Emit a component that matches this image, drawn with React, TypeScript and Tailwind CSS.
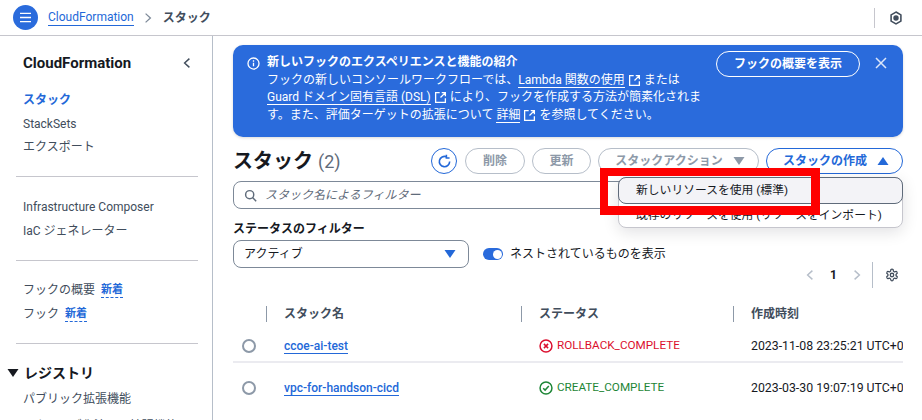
import React from "react";

const font = { fontFamily: 'Roboto,"Noto Sans CJK JP",sans-serif' };

function Ext({ className = "" }: { className?: string }) {
  return (
    <svg viewBox="0 0 16 16" className={`inline-block w-[13px] h-[13px] ${className}`} fill="none" stroke="currentColor" strokeWidth="1.6">
      <path d="M7 2H2v12h12V9M9.5 2H14v4.5M14 2L8 8" />
    </svg>
  );
}

function Caret({ up = false, className = "" }: { up?: boolean; className?: string }) {
  return (
    <svg viewBox="0 0 12 10" className={`w-[12px] h-[10px] ${className}`} fill="currentColor">
      <path d={up ? "M6 1l5.5 8H.5z" : "M.5 1h11L6 9z"} />
    </svg>
  );
}

function Nav({ children, className = "" }: { children: React.ReactNode; className?: string }) {
  return <div className={`text-[12px] leading-[18px] text-[#414d5c] ${className}`}>{children}</div>;
}

function New() {
  return <span className="ml-[6px] text-[11px] leading-[15px] font-bold text-[#2368d8] border-b border-dashed border-[#2368d8]">新着</span>;
}

function Sep({ className = "" }: { className?: string }) {
  return <div className={`h-px bg-[#c6c6cd] ml-[16px] w-[182px] ${className}`} />;
}

function Sidebar() {
  return (
    <aside className="w-[213px] shrink-0 border-r border-[#b6bec9] overflow-hidden h-[384px]">
      <div className="flex items-center justify-between pl-[23px] pr-[21px] pt-[16px]">
        <div className="text-[15px] leading-[22px] font-bold text-[#16191f]">CloudFormation</div>
        <svg viewBox="0 0 10 14" className="w-[8px] h-[12px] text-[#414d5c]" fill="none" stroke="currentColor" strokeWidth="1.8"><path d="M8 1.5L2 7l6 5.5" /></svg>
      </div>
      <div className="pl-[23px] pt-[17px]">
        <div className="text-[12px] leading-[18px] font-bold text-[#2368d8]">スタック</div>
        <Nav className="mt-[6px]">StackSets</Nav>
        <Nav className="mt-[5px]">エクスポート</Nav>
      </div>
      <Sep className="mt-[20px]" />
      <div className="pl-[23px] pt-[21px]">
        <Nav>Infrastructure Composer</Nav>
        <Nav className="mt-[6px]">IaC ジェネレーター</Nav>
      </div>
      <Sep className="mt-[20px]" />
      <div className="pl-[23px] pt-[20px]">
        <Nav className="flex items-center">フックの概要<New /></Nav>
        <Nav className="flex items-center mt-[6px]">フック<New /></Nav>
      </div>
      <Sep className="mt-[20px]" />
      <div className="flex items-center pl-[7px] mt-[19px] gap-[5px]">
        <Caret className="text-[#16191f]" />
        <div className="text-[14px] leading-[20px] font-bold text-[#16191f]">レジストリ</div>
      </div>
      <div className="pl-[23px] pt-[7px]">
        <Nav>パブリック拡張機能</Nav>
        <Nav className="mt-[9px]">アクティブ化済みの拡張機能</Nav>
      </div>
    </aside>
  );
}

function Pill({ children, className = "" }: { children: React.ReactNode; className?: string }) {
  return (
    <div className={`h-[26px] rounded-full border flex items-center justify-center text-[12px] font-bold ${className}`}>{children}</div>
  );
}

function Link({ children }: { children: React.ReactNode }) {
  return <span className="border-b border-white">{children}</span>;
}

function Banner() {
  return (
    <div className="h-[92px] rounded-[10px] bg-[#2a6bdc] text-white flex pl-[14px] pr-[16px] pt-[9px] shadow-[0_1px_3px_rgba(0,0,0,0.15)]">
      <svg viewBox="0 0 16 16" className="w-[13px] h-[13px] mt-[3px] shrink-0" fill="none" stroke="currentColor" strokeWidth="1.6">
        <circle cx="8" cy="8" r="6.8" /><path d="M8 7v4.5M8 4v1.8" />
      </svg>
      <div className="ml-[7px] w-[440px] shrink-0 text-[12px] leading-[17.5px] whitespace-nowrap">
        <div className="font-bold">新しいフックのエクスペリエンスと機能の紹介</div>
        <div>フックの新しいコンソールワークフローでは、<Link>Lambda 関数の使用</Link> <Ext /> または</div>
        <div><Link>Guard ドメイン固有言語 (DSL)</Link> <Ext /> により、フックを作成する方法が簡素化されま</div>
        <div>す。また、評価ターゲットの拡張について <Link>詳細</Link> <Ext /> を参照してください。</div>
      </div>
      <div className="ml-auto flex items-start">
        <div className="h-[26px] w-[144px] rounded-full border border-white flex items-center justify-center text-[12px] font-bold -mt-[3px]">フックの概要を表示</div>
        <svg viewBox="0 0 12 12" className="w-[12px] h-[12px] ml-[15px] mt-[3px] text-[#dbe6fa]" fill="none" stroke="currentColor" strokeWidth="1.5"><path d="M1 1l10 10M11 1L1 11" /></svg>
      </div>
    </div>
  );
}

function Toolbar() {
  return (
    <div className="flex items-center mt-[11px] h-[26px]">
      <div className="text-[20px] leading-[26px] font-bold text-[#16191f]">スタック <span className="text-[18px] font-normal text-[#5f6b7a]">(2)</span></div>
      <div className="ml-auto flex items-center gap-[7px]">
        <div className="w-[26px] h-[26px] rounded-full border border-[#2368d8] flex items-center justify-center mr-[1px]">
          <svg viewBox="0 0 16 16" className="w-[15px] h-[15px] text-[#2368d8]" fill="none" stroke="currentColor" strokeWidth="1.7">
            <path d="M13.5 8A5.5 5.5 0 1 1 10 2.9" /><path d="M10 .8V4.2h3.4" />
          </svg>
        </div>
        <Pill className="w-[60px] border-[#b6bec9] text-[#8d99a8]">削除</Pill>
        <Pill className="w-[59px] border-[#b6bec9] text-[#8d99a8]">更新</Pill>
        <Pill className="w-[161px] border-[#b6bec9] text-[#8d99a8] gap-[10px] pl-[3px]">スタックアクション<Caret className="text-[#8d99a8]" /></Pill>
        <Pill className="w-[137px] border-[#2368d8] text-[#2368d8] gap-[10px] pl-[3px]">スタックの作成<Caret up className="text-[#2368d8]" /></Pill>
      </div>
    </div>
  );
}

function Menu() {
  return (
    <div className="absolute right-0 -top-[4px] w-[285px] h-[51px] rounded-[8px] bg-white border border-[#c6c6cd] shadow-[0_4px_16px_rgba(0,7,22,0.12)] text-[11.8px] text-[#16191f]">
      <div className="-m-px h-[27px] rounded-[8px] border border-[#5f6b7a] bg-[#f3f3f7] flex items-center pl-[17px]">新しいリソースを使用 (標準)</div>
      <div className="h-[25px] flex items-center pl-[17px]">既存のリソースを使用 (リソースをインポート)</div>
    </div>
  );
}

function Filters() {
  return (
    <>
      <div className="relative mt-[7px]">
        <div className="h-[28px] rounded-[8px] border border-[#7d8998] flex items-center pl-[10px] text-[12px] italic text-[#5f6b7a]">
          <svg viewBox="0 0 16 16" className="w-[13px] h-[13px] mr-[8px] text-[#5f6b7a]" fill="none" stroke="currentColor" strokeWidth="1.8"><circle cx="7" cy="7" r="5" /><path d="M10.5 10.5L15 15" /></svg>
          スタック名によるフィルター
        </div>
        <Menu />
      </div>
      <div className="mt-[11px] text-[12px] leading-[18px] font-bold text-[#16191f]">ステータスのフィルター</div>
      <div className="flex items-center mt-[2px]">
        <div className="w-[236px] h-[28px] rounded-[8px] border border-[#7d8998] flex items-center justify-between pl-[10px] pr-[12px] text-[12px] text-[#16191f]">
          アクティブ<Caret className="text-[#2368d8]" />
        </div>
        <div className="ml-[14px] w-[20px] h-[12px] rounded-full bg-[#2a6bdc] relative">
          <div className="absolute right-[1.5px] top-[1.5px] w-[9px] h-[9px] rounded-full bg-white" />
        </div>
        <div className="ml-[7px] text-[12px] text-[#16191f]">ネストされているものを表示</div>
      </div>
    </>
  );
}

function Pager() {
  return (
    <div className="flex justify-end items-center h-[26px] -mt-[6px] pr-[4px]">
      <svg viewBox="0 0 10 14" className="w-[8px] h-[12px] text-[#b6bec9]" fill="none" stroke="currentColor" strokeWidth="1.8"><path d="M8 1.5L2 7l6 5.5" /></svg>
      <div className="mx-[16px] text-[12px] font-bold text-[#16191f]">1</div>
      <svg viewBox="0 0 10 14" className="w-[8px] h-[12px] text-[#b6bec9]" fill="none" stroke="currentColor" strokeWidth="1.8"><path d="M2 1.5L8 7l-6 5.5" /></svg>
      <div className="ml-[11px] mr-[12px] w-px h-[26px] bg-[#b6bec9]" />
      <svg viewBox="0 0 24 24" className="w-[14px] h-[14px] text-[#414d5c]" fill="none" stroke="currentColor" strokeWidth="2.2">
        <path d="M12.2 2h-.4a2 2 0 0 0-2 2v.2a2 2 0 0 1-1 1.7l-.4.3a2 2 0 0 1-2 0l-.2-.1a2 2 0 0 0-2.7.7l-.2.4a2 2 0 0 0 .7 2.7l.2.1a2 2 0 0 1 1 1.7v.5a2 2 0 0 1-1 1.7l-.2.1a2 2 0 0 0-.7 2.7l.2.4a2 2 0 0 0 2.7.7l.2-.1a2 2 0 0 1 2 0l.4.3a2 2 0 0 1 1 1.7v.2a2 2 0 0 0 2 2h.4a2 2 0 0 0 2-2v-.2a2 2 0 0 1 1-1.7l.4-.3a2 2 0 0 1 2 0l.2.1a2 2 0 0 0 2.7-.7l.2-.4a2 2 0 0 0-.7-2.7l-.2-.1a2 2 0 0 1-1-1.7v-.5a2 2 0 0 1 1-1.7l.2-.1a2 2 0 0 0 .7-2.7l-.2-.4a2 2 0 0 0-2.7-.7l-.2.1a2 2 0 0 1-2 0l-.4-.3a2 2 0 0 1-1-1.7V4a2 2 0 0 0-2-2z" />
        <circle cx="12" cy="12" r="3" />
      </svg>
    </div>
  );
}

const cols = "grid grid-cols-[34px_255px_212px_169px]";

function Row({ name, status, date, ok, border }: { name: string; status: string; date: string; ok: boolean; border: boolean }) {
  const color = ok ? "text-[#1d8636]" : "text-[#db0f2e]";
  return (
    <div className={`${cols} items-center text-[12px] ${border ? "h-[39px] pt-[7px] border-b-2 border-[#ebebf0]" : "h-[50px]"}`}>
      <div className="pl-[9px]"><div className="w-[14px] h-[14px] rounded-full border-2 border-[#8d99a8]" /></div>
      <div className="pl-[17px]"><span className="text-[#2368d8] border-b border-[#2368d8] font-medium">{name}</span></div>
      <div className={`pl-[17px] flex items-center gap-[4px] text-[11.7px] ${color}`}>
        <svg viewBox="0 0 16 16" className="w-[14px] h-[14px] shrink-0" fill="none" stroke="currentColor" strokeWidth="1.7">
          <circle cx="8" cy="8" r="6.8" />
          {ok ? <path d="M4.8 8.2l2.2 2.2 4.2-4.6" /> : <path d="M5.6 5.6l4.8 4.8M10.4 5.6l-4.8 4.8" />}
        </svg>
        {status}
      </div>
      <div className="pl-[17px] text-[12.3px] text-[#16191f] whitespace-nowrap overflow-hidden">{date}</div>
    </div>
  );
}

function Table() {
  return (
    <div className="mt-[16px]">
      <div className={`${cols} h-[20px] items-center text-[12px] font-bold text-[#414d5c]`}>
        <div className="h-[16px] border-r border-[#8d99a8] mr-0 w-[34px]" />
        <div className="pl-[17px] h-[16px] leading-[16px] border-r border-[#8d99a8]">スタック名</div>
        <div className="pl-[17px] h-[16px] leading-[16px] border-r border-[#8d99a8]">ステータス</div>
        <div className="pl-[17px] h-[16px] leading-[16px]">作成時刻</div>
      </div>
      <Row name="ccoe-ai-test" status="ROLLBACK_COMPLETE" date="2023-11-08 23:25:21 UTC+09:00" ok={false} border />
      <Row name="vpc-for-handson-cicd" status="CREATE_COMPLETE" date="2023-03-30 19:07:19 UTC+09:00" ok border={false} />
    </div>
  );
}

export default function App() {
  return (
    <div style={font} className="relative w-[922px] h-[420px] overflow-hidden bg-white">
      <header className="h-[36px] border-b border-[#c6c6cd] flex items-center pl-[13px] pr-[19px]">
        <div className="w-[25px] h-[25px] rounded-full bg-[#2a6bdc] flex items-center justify-center">
          <svg viewBox="0 0 14 12" className="w-[13px] h-[11px] text-white" fill="none" stroke="currentColor" strokeWidth="1.6"><path d="M1 1.5h12M1 6h12M1 10.5h12" /></svg>
        </div>
        <span className="ml-[10px] text-[12px] leading-[16px] text-[#2368d8] border-b border-[#2368d8]">CloudFormation</span>
        <svg viewBox="0 0 10 14" className="ml-[10px] mr-[11px] w-[8px] h-[12px] text-[#7d8998]" fill="none" stroke="currentColor" strokeWidth="1.6"><path d="M2 1.5L8 7l-6 5.5" /></svg>
        <span className="text-[12px] font-bold text-[#414d5c]">スタック</span>
        <div className="ml-auto w-px h-[20px] bg-[#c6c6cd] mr-[14px]" />
        <svg viewBox="0 0 16 16" className="w-[14px] h-[14px] text-[#414d5c]" fill="none" stroke="currentColor" strokeWidth="1.8">
          <path d="M8 1.2l5.6 3.2v7.2L8 14.8l-5.6-3.2V4.4z" /><circle cx="8" cy="8" r="2.2" fill="currentColor" />
        </svg>
      </header>
      <div className="flex">
        <Sidebar />
        <main className="ml-[20px] w-[670px] pt-[9px]">
          <Banner />
          <Toolbar />
          <Filters />
          <Pager />
          <Table />
        </main>
      </div>
      <div className="absolute left-[600px] top-[168px] w-[220px] h-[47px] border-[8px] border-r-[9px] border-b-[9px] border-[#fe0000] pointer-events-none" />
    </div>
  );
}
